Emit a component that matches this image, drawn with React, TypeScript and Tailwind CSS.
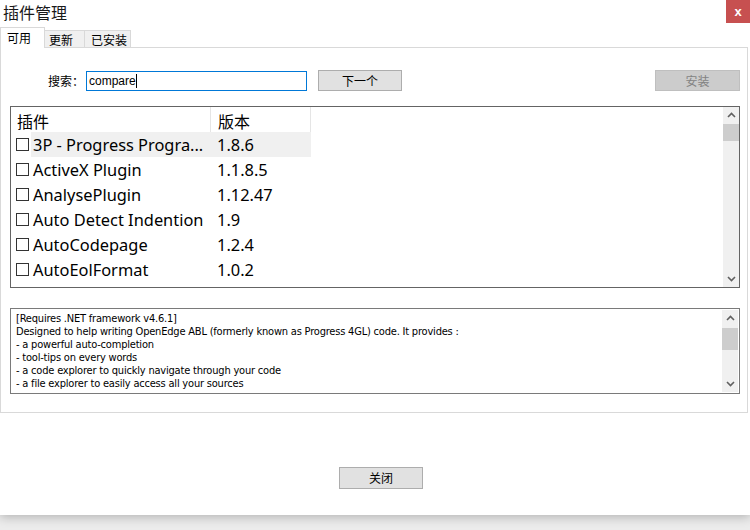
import React from 'react';

const plugins = [
  { name: '3P - Progress Progra...', version: '1.8.6' },
  { name: 'ActiveX Plugin', version: '1.1.8.5' },
  { name: 'AnalysePlugin', version: '1.12.47' },
  { name: 'Auto Detect Indention', version: '1.9' },
  { name: 'AutoCodepage', version: '1.2.4' },
  { name: 'AutoEolFormat', version: '1.0.2' },
];

const description = [
  '[Requires .NET framework v4.6.1]',
  'Designed to help writing OpenEdge ABL (formerly known as Progress 4GL) code. It provides :',
  '- a powerful auto-completion',
  '- tool-tips on every words',
  '- a code explorer to quickly navigate through your code',
  '- a file explorer to easily access all your sources',
];

const cjk = "font-['Microsoft_YaHei','Noto_Sans_CJK_SC',sans-serif]";

const ScrollBar = ({ thumbTop, thumbHeight }: { thumbTop: string; thumbHeight: string }) => (
  <div className="w-[16px] h-full bg-[#f0f0f0] flex flex-col items-center justify-between py-[3px]">
    <svg width="9" height="6" viewBox="0 0 9 6" className="mt-[2px]">
      <path d="M1 5 L4.5 1.5 L8 5" stroke="#606060" strokeWidth="1.6" fill="none" />
    </svg>
    <div className={`absolute left-0 w-[16px] bg-[#cdcdcd] ${thumbTop} ${thumbHeight}`}></div>
    <svg width="9" height="6" viewBox="0 0 9 6" className="mb-[2px]">
      <path d="M1 1 L4.5 4.5 L8 1" stroke="#606060" strokeWidth="1.6" fill="none" />
    </svg>
  </div>
);

const App = () => {
  return (
    <div className={`w-[750px] h-[530px] bg-[#ececec] overflow-hidden ${cjk}`}>
      <div className="w-[750px] h-[515px] bg-white flex flex-col shadow-[0_2px_10px_rgba(0,0,0,0.25)] relative">
        {/* Title bar */}
        <div className="h-[27px] flex items-start justify-between">
          <div className="pl-[3px] pt-[1px] text-[16px] leading-[22px] text-[#1a1a1a]">插件管理</div>
          <div className="w-[24px] h-[23px] bg-[#c75050] flex items-center justify-center text-white text-[13px] font-bold font-['Liberation_Sans',sans-serif]">
            x
          </div>
        </div>

        {/* Tabs */}
        <div className="h-[20px] flex items-end text-[12px] text-black relative z-10">
          <div className="h-[21px] w-[45px] bg-white border-t border-l border-r border-[#d9d9d9] pl-[6px] leading-[20px] -mb-[1px]">可用</div>
          <div className="h-[17px] w-[40px] bg-[#f0f0f0] border-t border-r border-[#d9d9d9] pl-[4px] leading-[17px]">更新</div>
          <div className="h-[17px] w-[46px] bg-[#f0f0f0] border-t border-r border-[#d9d9d9] pl-[6px] leading-[17px]">已安装</div>
        </div>

        {/* Tab panel */}
        <div className="w-[748px] h-[366px] border border-[#d9d9d9] bg-white flex flex-col">
          {/* Search row */}
          <div className="mt-[22px] h-[21px] flex items-center text-[12px]">
            <div className="w-[85px] pr-[2px] text-right text-black">搜索：</div>
            <div className="w-[221px] h-[20px] border border-[#0078d7] flex items-center pl-[2px] font-['Liberation_Sans',sans-serif] text-[12px] text-black">
              compare<span className="w-[1px] h-[14px] bg-black inline-block"></span>
            </div>
            <button className="ml-[11px] w-[84px] h-[21px] bg-[#e1e1e1] border border-[#adadad] text-[12px] text-black">下一个</button>
            <div className="flex-1"></div>
            <button className="mr-[7px] w-[85px] h-[21px] bg-[#cccccc] border border-[#bfbfbf] text-[12px] text-[#838383]">安装</button>
          </div>

          {/* Plugin list */}
          <div className="ml-[9px] mt-[15px] w-[730px] h-[182px] border border-[#646464] flex relative">
            <div className="flex-1 flex flex-col">
              <div className="h-[25px] flex text-[16px] text-black">
                <div className="w-[200px] pl-[6px] pt-[2px] leading-[25px] border-r border-[#e5e5e5]">插件</div>
                <div className="w-[100px] pl-[7px] pt-[2px] leading-[25px] border-r border-[#e5e5e5]">版本</div>
              </div>
              {plugins.map((p, i) => (
                <div key={i} className="h-[25px] flex items-center text-[16.4px] text-black font-['Noto_Sans','Open_Sans',sans-serif]">
                  <div className="w-[20px] flex justify-end pr-[2px]">
                    <div className="w-[13px] h-[13px] border border-[#333333] bg-white"></div>
                  </div>
                  <div className={`w-[280px] h-[25px] flex items-center pt-[2px] ${i === 0 ? 'bg-[#f0f0f0]' : ''}`}>
                    <div className="w-[180px] pl-[2px] whitespace-nowrap">{p.name}</div>
                    <div className="pl-[6px]">{p.version}</div>
                  </div>
                </div>
              ))}
            </div>
            <div className="relative">
              <ScrollBar thumbTop="top-[17px]" thumbHeight="h-[17px]" />
            </div>
          </div>

          {/* Description */}
          <div className="ml-[9px] mt-[20px] w-[730px] h-[86px] border border-[#7a7a7a] flex">
            <div className="flex-1 pl-[5px] pt-[3px] text-[11px] leading-[13px] text-black font-['DejaVu_Sans_Condensed','Liberation_Sans',sans-serif] tracking-[-0.2px]">
              {description.map((line, i) => (
                <div key={i} className="whitespace-nowrap">{line}</div>
              ))}
            </div>
            <div className="relative mr-[1px] my-[1px]">
              <ScrollBar thumbTop="top-[18px]" thumbHeight="h-[22px]" />
            </div>
          </div>
        </div>

        {/* Close button */}
        <div className="mt-[54px] flex">
          <button className="ml-[339px] w-[84px] h-[22px] bg-[#e1e1e1] border border-[#adadad] text-[12px] text-black">关闭</button>
        </div>
      </div>
    </div>
  );
};

export default App;
